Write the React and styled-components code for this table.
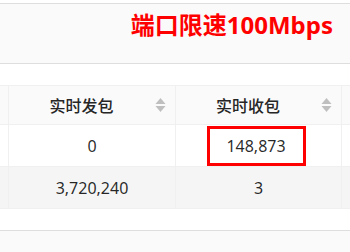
import styled, { createGlobalStyle } from "styled-components";

const GlobalStyle = createGlobalStyle`
  body {
    margin: 0;
    background: #ffffff;
    font-family: "Noto Sans", "Noto Sans CJK SC", sans-serif;
    color: rgba(0, 0, 0, 0.85);
  }
`;

const Page = styled.div`
  width: 350px;
  height: 252px;
  overflow: hidden;
  padding-top: 3px;
  box-sizing: border-box;
`;

const TopPanel = styled.div`
  height: 61px;
  box-sizing: border-box;
  background: #fafafa;
  border-top: 1px solid #dedede;
  border-bottom: 1px solid #dedede;
  display: flex;
  justify-content: flex-end;
  align-items: flex-start;
  padding: 3px 17px 0 0;
`;

const Title = styled.div`
  color: #ff0000;
  font-size: 24px;
  line-height: 36px;
  font-weight: 700;
  font-family: "Noto Sans", "Noto Sans CJK SC", sans-serif;
`;

const TableWrap = styled.div`
  margin-top: 21px;
`;

const Row = styled.div`
  display: grid;
  grid-template-columns: 8px 167px 166px 9px;
  height: ${(p) => p.$height}px;
  box-sizing: border-box;
  background: ${(p) => p.$bg || "#ffffff"};
  border-top: ${(p) => (p.$top ? "1px solid #f0f0f0" : "none")};
  border-bottom: 1px solid #f0f0f0;
`;

const Cell = styled.div`
  border-left: ${(p) => (p.$first ? "none" : "1px solid #f0f0f0")};
  display: flex;
  align-items: center;
  justify-content: center;
  font-size: 16px;
  color: rgba(0, 0, 0, 0.85);
  min-width: 0;
`;

const HeadCell = styled(Cell)`
  padding: 0 9px 0 9px;
  font-weight: 500;
  color: #262626;
`;

const HeadText = styled.span`
  flex: 1;
  text-align: center;
  margin-right: 10px;
`;

const Sorter = styled.svg`
  width: 11px;
  height: 14px;
  flex: none;
`;

const Marked = styled.div`
  width: 99px;
  height: 40px;
  box-sizing: border-box;
  border: 3px solid #ff0000;
  display: flex;
  align-items: center;
  justify-content: center;
  margin-right: 5px;
  margin-top: 1px;
`;

const BottomPanel = styled.div`
  margin-top: 21px;
  height: 40px;
  background: #fafafa;
  border-top: 1px solid #dedede;
`;

function SortIcon() {
  return (
    <Sorter viewBox="0 0 11 14">
      <path d="M5.5 0 L10.5 6 L0.5 6 Z" fill="#bfbfbf" />
      <path d="M0.5 8 L10.5 8 L5.5 14 Z" fill="#bfbfbf" />
    </Sorter>
  );
}

export default function App() {
  return (
    <Page>
      <GlobalStyle />
      <TopPanel>
        <Title>端口限速100Mbps</Title>
      </TopPanel>
      <TableWrap>
        <Row $height={40} $bg="#fafafa" $top>
          <Cell $first />
          <HeadCell>
            <HeadText>实时发包</HeadText>
            <SortIcon />
          </HeadCell>
          <HeadCell>
            <HeadText>实时收包</HeadText>
            <SortIcon />
          </HeadCell>
          <Cell />
        </Row>
        <Row $height={42}>
          <Cell $first />
          <Cell>0</Cell>
          <Cell>
            <Marked>148,873</Marked>
          </Cell>
          <Cell />
        </Row>
        <Row $height={42} $bg="#f5f5f5">
          <Cell $first />
          <Cell>3,720,240</Cell>
          <Cell>3</Cell>
          <Cell />
        </Row>
      </TableWrap>
      <BottomPanel />
    </Page>
  );
}
